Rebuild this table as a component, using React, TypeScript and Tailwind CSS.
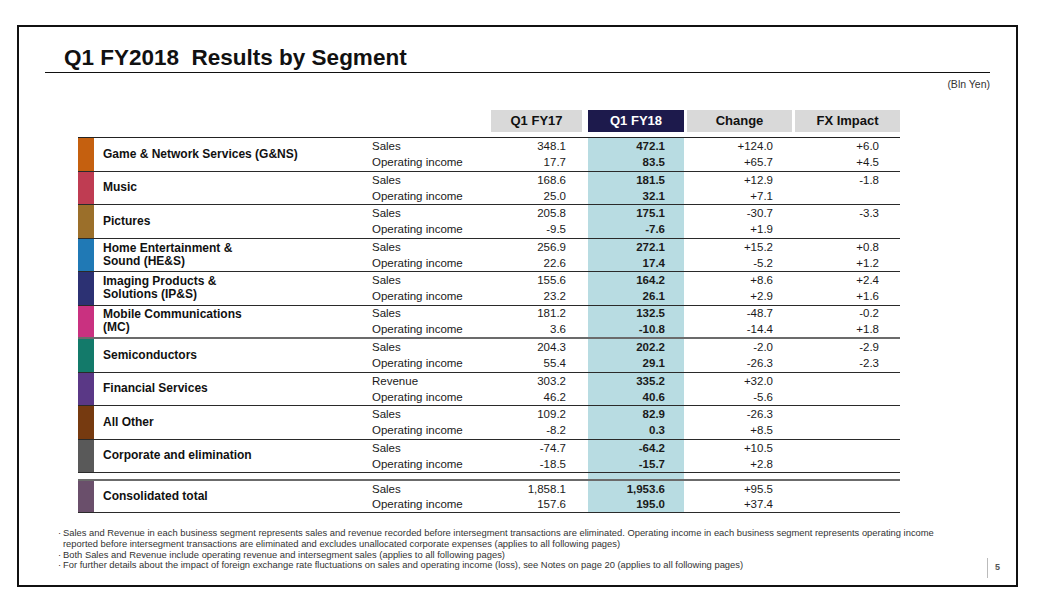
import React from "react";

type Line = [string, string, string, string, string];
type Seg = { name: string[]; color: string; rows: Line[]; bottom?: string };

const segs: Seg[] = [
  { name: ["Game & Network Services (G&NS)"], color: "bg-[#c5600f]", rows: [["Sales", "348.1", "472.1", "+124.0", "+6.0"], ["Operating income", "17.7", "83.5", "+65.7", "+4.5"]] },
  { name: ["Music"], color: "bg-[#bf3c52]", rows: [["Sales", "168.6", "181.5", "+12.9", "-1.8"], ["Operating income", "25.0", "32.1", "+7.1", ""]] },
  { name: ["Pictures"], color: "bg-[#9b6f2a]", rows: [["Sales", "205.8", "175.1", "-30.7", "-3.3"], ["Operating income", "-9.5", "-7.6", "+1.9", ""]] },
  { name: ["Home Entertainment &", "Sound (HE&S)"], color: "bg-[#2079b5]", rows: [["Sales", "256.9", "272.1", "+15.2", "+0.8"], ["Operating income", "22.6", "17.4", "-5.2", "+1.2"]] },
  { name: ["Imaging Products &", "Solutions (IP&S)"], color: "bg-[#2c3173]", rows: [["Sales", "155.6", "164.2", "+8.6", "+2.4"], ["Operating income", "23.2", "26.1", "+2.9", "+1.6"]] },
  { name: ["Mobile Communications", "(MC)"], color: "bg-[#c93180]", rows: [["Sales", "181.2", "132.5", "-48.7", "-0.2"], ["Operating income", "3.6", "-10.8", "-14.4", "+1.8"]] },
  { name: ["Semiconductors"], color: "bg-[#137a6a]", rows: [["Sales", "204.3", "202.2", "-2.0", "-2.9"], ["Operating income", "55.4", "29.1", "-26.3", "-2.3"]] },
  { name: ["Financial Services"], color: "bg-[#5a3886]", rows: [["Revenue", "303.2", "335.2", "+32.0", ""], ["Operating income", "46.2", "40.6", "-5.6", ""]] },
  { name: ["All Other"], color: "bg-[#763a10]", rows: [["Sales", "109.2", "82.9", "-26.3", ""], ["Operating income", "-8.2", "0.3", "+8.5", ""]] },
  { name: ["Corporate and elimination"], color: "bg-[#595959]", rows: [["Sales", "-74.7", "-64.2", "+10.5", ""], ["Operating income", "-18.5", "-15.7", "+2.8", ""]] },
];

const total: Seg = { name: ["Consolidated total"], color: "bg-[#6a4f6b]", rows: [["Sales", "1,858.1", "1,953.6", "+95.5", ""], ["Operating income", "157.6", "195.0", "+37.4", ""]] };

function Cells({ seg }: { seg: Seg }) {
  return (
    <>
      <div className={`w-[16px] shrink-0 ${seg.color}`} />
      <div className="w-[278px] shrink-0 pl-[9px] flex flex-col justify-center text-[12px] font-bold leading-[13px] text-[#111]">
        {seg.name.map((n) => (
          <div key={n}>{n}</div>
        ))}
      </div>
      <div className="w-[119px] shrink-0 flex flex-col">
        {seg.rows.map((r) => (
          <div key={r[0]} className="flex-1 flex items-center">{r[0]}</div>
        ))}
      </div>
      <div className="w-[91px] shrink-0 flex flex-col">
        {seg.rows.map((r) => (
          <div key={r[0]} className="flex-1 flex items-center justify-end pr-[16px]">{r[1]}</div>
        ))}
      </div>
      <div className="w-[6px] shrink-0" />
      <div className="w-[96px] shrink-0 flex flex-col bg-[#b8dce2] font-bold">
        {seg.rows.map((r) => (
          <div key={r[0]} className="flex-1 flex items-center justify-end pr-[19px]">{r[2]}</div>
        ))}
      </div>
      <div className="w-[3px] shrink-0" />
      <div className="w-[105px] shrink-0 flex flex-col">
        {seg.rows.map((r) => (
          <div key={r[0]} className="flex-1 flex items-center justify-end pr-[19px]">{r[3]}</div>
        ))}
      </div>
      <div className="w-[3px] shrink-0" />
      <div className="w-[105px] shrink-0 flex flex-col">
        {seg.rows.map((r) => (
          <div key={r[0]} className="flex-1 flex items-center justify-end pr-[21px]">{r[4]}</div>
        ))}
      </div>
    </>
  );
}

export default function App() {
  return (
    <div className="w-[1043px] h-[614px] bg-white pt-[25px] pl-[17px] text-[#1a1a1a]" style={{ fontFamily: '"Liberation Sans", Arial, sans-serif' }}>
      <div className="w-[1001px] h-[562px] border-2 border-[#111] flex flex-col">
        {/* Title */}
        <div className="ml-[26px] w-[945px] mt-[17px] h-[29px] border-b border-[#111] pl-[19px] text-[22.5px] font-bold leading-[28px] text-[#111]">
          Q1 FY2018&nbsp; Results by Segment
        </div>
        <div className="ml-[26px] w-[945px] mt-[4px] h-[14px] text-right text-[10.5px] leading-[14px] text-[#333]">(Bln Yen)</div>

        {/* Table */}
        <div className="ml-[59px] w-[822px] mt-[19px] text-[11.5px] leading-[14px] text-[#1a1a1a]">
          <div className="flex h-[22px] text-[13px] font-bold">
            <div className="w-[413px] shrink-0" />
            <div className="w-[91px] shrink-0 bg-[#d9d9d9] flex items-center justify-center text-[#111]">Q1 FY17</div>
            <div className="w-[6px] shrink-0" />
            <div className="w-[96px] shrink-0 bg-[#1d1a4c] flex items-center justify-center text-white">Q1 FY18</div>
            <div className="w-[3px] shrink-0" />
            <div className="w-[105px] shrink-0 bg-[#d9d9d9] flex items-center justify-center text-[#111]">Change</div>
            <div className="w-[3px] shrink-0" />
            <div className="w-[105px] shrink-0 bg-[#d9d9d9] flex items-center justify-center text-[#111]">FX Impact</div>
          </div>
          <div className="mt-[5px] border-t border-[#222]">
            {segs.map((s, i) => (
              <div key={i} className={`flex h-[33.5px] border-b ${i === 5 ? "border-b-2 border-[#6b6b6b]" : "border-[#2a2a2a]"}`}>
                <Cells seg={s} />
              </div>
            ))}
            <div className="flex h-[6px]">
              <div className="w-[510px] shrink-0" />
              <div className="w-[96px] shrink-0 bg-[#b8dce2]" />
            </div>
            <div className="flex h-[34px] border-t-2 border-t-[#6b6b6b] border-b border-b-[#2a2a2a]">
              <Cells seg={total} />
            </div>
          </div>
        </div>

        {/* Footer */}
        <div className="flex mt-[15px]">
          <div className="ml-[39px] w-[920px] text-[9.4px] leading-[10.8px] text-[#333] whitespace-nowrap">
            <div className="flex">
              <span className="w-[5px] shrink-0">·</span>
              <div>
                <div>Sales and Revenue in each business segment represents sales and revenue recorded before intersegment transactions are eliminated. Operating income in each business segment represents operating income</div>
                <div>reported before intersegment transactions are eliminated and excludes unallocated corporate expenses (applies to all following pages)</div>
              </div>
            </div>
            <div className="flex">
              <span className="w-[5px] shrink-0">·</span>
              <div>Both Sales and Revenue include operating revenue and intersegment sales (applies to all following pages)</div>
            </div>
            <div className="flex">
              <span className="w-[5px] shrink-0">·</span>
              <div>For further details about the impact of foreign exchange rate fluctuations on sales and operating income (loss), see Notes on page 20 (applies to all following pages)</div>
            </div>
          </div>
          <div className="ml-[9px] mt-[30px] h-[20px] border-l border-[#bbb] pl-[7px] flex items-center text-[9px] font-bold text-[#555]">5</div>
        </div>
      </div>
    </div>
  );
}
